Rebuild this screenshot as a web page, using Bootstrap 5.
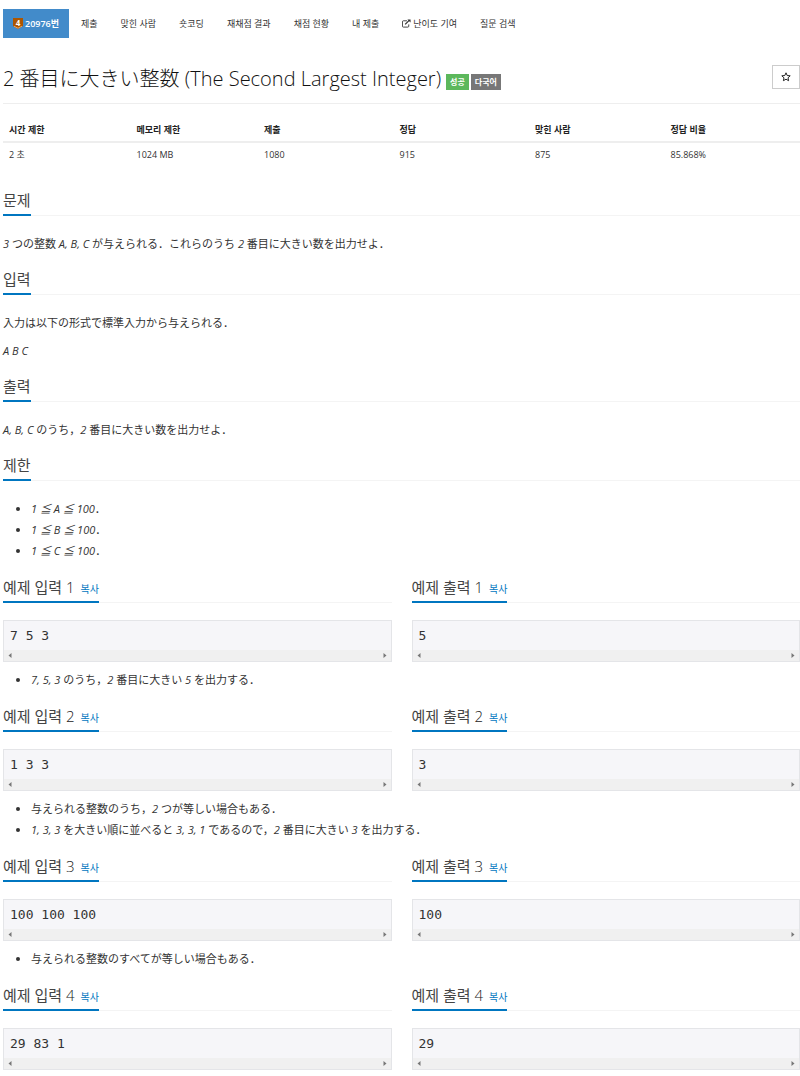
<!DOCTYPE html>
<html lang="ko">
<head>
<meta charset="utf-8">
<meta name="viewport" content="width=device-width, initial-scale=1">
<title>20976번: 2 番目に大きい整数</title>
<link href="https://cdn.jsdelivr.net/npm/bootstrap@5.3.0/dist/css/bootstrap.min.css" rel="stylesheet">
<style>
  body { font-family: "Open Sans", "Noto Sans CJK KR", sans-serif; font-size: 11px; line-height: 21px; color: #333; background: #fff; }
  .page { padding: 9px 0 5px 3px; }
  :lang(ja) { font-family: "Open Sans", "Noto Sans CJK JP", sans-serif; }
  .problem-menu { margin-bottom: 27px; column-gap: 1px; }
  .problem-menu .nav-link { font-size: 9px; line-height: 13px; padding: 8px 11px; color: #333; border-radius: 0; white-space: nowrap; }
  .problem-menu .nav-link.active { background: #428bca; color: #fff; font-weight: 600; padding: 8px 10px; }
  .with-icon { display: flex; align-items: center; gap: 2px; }
  .tier { width: 10px; height: 11px; }
  .problem-head { border-bottom: 1px solid #eee; padding-bottom: 10px; margin-bottom: 14px; }
  .problem-title { font-size: 20px; font-weight: 300; line-height: 28px; color: #111; }
  .tags { gap: 2px; margin: 0 0 3px 5px; }
  .tag { font-size: 8px; font-weight: 600; line-height: 16px; padding: 0 4px; color: #fff; }
  .tag-ok { background: #5cb85c; }
  .tag-lang { background: #777; }
  .btn-star { border: 1px solid #ccc; border-radius: 0; padding: 5px 8px; line-height: 0; background: #fff; }
  .info { font-size: 9px; line-height: 13px; margin-bottom: 20px; table-layout: fixed; }
  .info th, .info td { padding: 5px 6px; border-bottom: 0; color: #333; background: none; box-shadow: none; }
  .info th { font-weight: 700; color: #222; border-bottom: 2px solid #eee; }
  .w16 { width: 16%; }
  .w17 { width: 17%; }
  .headline { border-bottom: 1px solid #f4f4f4; margin: 0 0 17px; height: 30px; display: flex; }
  .headline h2 { font-size: 15px; font-weight: 400; line-height: 28px; height: 30px; color: #444; margin: 0; border-bottom: 2px solid #0076c0; white-space: nowrap; }
  .num { font-weight: 300; color: #222; }
  .copy { font-size: 10px; font-weight: 400; color: #0076c0; border: 0; background: none; padding: 0; margin-left: 2px; line-height: 14px; }
  .text { margin-bottom: 11px; }
  .text p { margin-bottom: 7px; }
  .text p:last-child { margin-bottom: 0; }
  .notes { margin: 0 0 12px; padding-left: 28px; }
  .samples { gap: 20px; }
  .sample { border: 1px solid #e4e5e8; background: #f6f6f9; margin-bottom: 7px; }
  .sample pre { margin: 0; padding: 5px 6px 4px; font-family: "DejaVu Sans Mono", monospace; font-size: 13px; line-height: 20px; color: #333; }
  .track { background: #f0f0f0; height: 11px; padding: 0 4px; }
  .track svg { width: 4px; height: 5px; fill: #777; }
</style>
</head>
<body>
<svg class="d-none">
  <symbol id="arrow-l" viewBox="0 0 4 5"><path d="M3.500 0v5L.5 2.500z"/></symbol>
  <symbol id="arrow-r" viewBox="0 0 4 5"><path d="M.5 0v5l3-2.500z"/></symbol>
</svg>
<main class="page">
  <ul class="nav problem-menu">
    <li class="nav-item"><a class="nav-link active with-icon" href="#"><svg class="tier" viewBox="0 0 10 11"><path d="M0 0h10v8L5 11 0 8z" fill="#ad5600"/><path d="M1 8.200l4 2 4-2" fill="none" stroke="#ffb46b" stroke-width=".8"/><text x="5" y="7.600" font-size="8" font-weight="700" text-anchor="middle" fill="#fff">4</text></svg>20976번</a></li>
    <li class="nav-item"><a class="nav-link" href="#">제출</a></li>
    <li class="nav-item"><a class="nav-link" href="#">맞힌 사람</a></li>
    <li class="nav-item"><a class="nav-link" href="#">숏코딩</a></li>
    <li class="nav-item"><a class="nav-link" href="#">재채점 결과</a></li>
    <li class="nav-item"><a class="nav-link" href="#">채점 현황</a></li>
    <li class="nav-item"><a class="nav-link" href="#">내 제출</a></li>
    <li class="nav-item"><a class="nav-link with-icon" href="#"><svg width="9" height="9" viewBox="0 0 10 9" fill="none" stroke="#333"><path d="M5.500 1.500h-4q-1 0-1 1v5q0 1 1 1h5q1 0 1-1V5.500"/><path d="M3.500 5.500L8 1" stroke-width="1.400"/><path d="M6 0h3.500v3.500z" fill="#333" stroke="none"/></svg>난이도 기여</a></li>
    <li class="nav-item"><a class="nav-link" href="#">질문 검색</a></li>
  </ul>

  <header class="problem-head d-flex justify-content-between align-items-start">
    <div class="d-flex align-items-end">
      <h1 class="problem-title mb-0" lang="ja">2 番目に大きい整数 (The Second Largest Integer)</h1>
      <div class="tags d-flex"><span class="tag tag-ok">성공</span><span class="tag tag-lang">다국어</span></div>
    </div>
    <button type="button" class="btn btn-star" aria-label="즐겨찾기"><svg width="10" height="12" viewBox="0 0 10 12" fill="none" stroke="#222"><path d="M5 1.800l1.200 2.700 3 .3-2.200 2 .6 2.900L5 8.200 2.400 9.700 3 6.800l-2.200-2 3-.3z"/></svg></button>
  </header>

  <table class="table info">
    <thead><tr><th class="w16">시간 제한</th><th class="w16">메모리 제한</th><th class="w17">제출</th><th class="w17">정답</th><th class="w17">맞힌 사람</th><th class="w17">정답 비율</th></tr></thead>
    <tbody><tr><td>2 초</td><td>1024 MB</td><td>1080</td><td>915</td><td>875</td><td>85.868%</td></tr></tbody>
  </table>

  <section>
    <div class="headline"><h2>문제</h2></div>
    <div class="text" lang="ja"><p><em>3</em> つの整数 <em>A, B, C</em> が与えられる．これらのうち <em>2</em> 番目に大きい数を出力せよ．</p></div>
  </section>
  <section>
    <div class="headline"><h2>입력</h2></div>
    <div class="text" lang="ja"><p>入力は以下の形式で標準入力から与えられる．</p><p><em>A B C</em></p></div>
  </section>
  <section>
    <div class="headline"><h2>출력</h2></div>
    <div class="text" lang="ja"><p><em>A, B, C</em> のうち，<em>2</em> 番目に大きい数を出力せよ．</p></div>
  </section>
  <section>
    <div class="headline"><h2>제한</h2></div>
    <ul class="notes" lang="ja"><li><em>1 ≦ A ≦ 100</em>．</li><li><em>1 ≦ B ≦ 100</em>．</li><li><em>1 ≦ C ≦ 100</em>．</li></ul>
  </section>

  <section>
    <div class="samples d-flex">
      <div class="w-50"><div class="headline"><h2>예제 입력 <span class="num">1</span> <button type="button" class="copy">복사</button></h2></div><div class="sample"><pre>7 5 3</pre><div class="track d-flex justify-content-between align-items-center"><svg><use href="#arrow-l"/></svg><svg><use href="#arrow-r"/></svg></div></div></div>
      <div class="w-50"><div class="headline"><h2>예제 출력 <span class="num">1</span> <button type="button" class="copy">복사</button></h2></div><div class="sample"><pre>5</pre><div class="track d-flex justify-content-between align-items-center"><svg><use href="#arrow-l"/></svg><svg><use href="#arrow-r"/></svg></div></div></div>
    </div>
    <ul class="notes" lang="ja"><li><em>7, 5, 3</em> のうち，<em>2</em> 番目に大きい <em>5</em> を出力する．</li></ul>
  </section>
  <section>
    <div class="samples d-flex">
      <div class="w-50"><div class="headline"><h2>예제 입력 <span class="num">2</span> <button type="button" class="copy">복사</button></h2></div><div class="sample"><pre>1 3 3</pre><div class="track d-flex justify-content-between align-items-center"><svg><use href="#arrow-l"/></svg><svg><use href="#arrow-r"/></svg></div></div></div>
      <div class="w-50"><div class="headline"><h2>예제 출력 <span class="num">2</span> <button type="button" class="copy">복사</button></h2></div><div class="sample"><pre>3</pre><div class="track d-flex justify-content-between align-items-center"><svg><use href="#arrow-l"/></svg><svg><use href="#arrow-r"/></svg></div></div></div>
    </div>
    <ul class="notes" lang="ja"><li>与えられる整数のうち，<em>2</em> つが等しい場合もある．</li><li><em>1, 3, 3</em> を大きい順に並べると <em>3, 3, 1</em> であるので，<em>2</em> 番目に大きい <em>3</em> を出力する．</li></ul>
  </section>
  <section>
    <div class="samples d-flex">
      <div class="w-50"><div class="headline"><h2>예제 입력 <span class="num">3</span> <button type="button" class="copy">복사</button></h2></div><div class="sample"><pre>100 100 100</pre><div class="track d-flex justify-content-between align-items-center"><svg><use href="#arrow-l"/></svg><svg><use href="#arrow-r"/></svg></div></div></div>
      <div class="w-50"><div class="headline"><h2>예제 출력 <span class="num">3</span> <button type="button" class="copy">복사</button></h2></div><div class="sample"><pre>100</pre><div class="track d-flex justify-content-between align-items-center"><svg><use href="#arrow-l"/></svg><svg><use href="#arrow-r"/></svg></div></div></div>
    </div>
    <ul class="notes" lang="ja"><li>与えられる整数のすべてが等しい場合もある．</li></ul>
  </section>
  <section>
    <div class="samples d-flex">
      <div class="w-50"><div class="headline"><h2>예제 입력 <span class="num">4</span> <button type="button" class="copy">복사</button></h2></div><div class="sample mb-0"><pre>29 83 1</pre><div class="track d-flex justify-content-between align-items-center"><svg><use href="#arrow-l"/></svg><svg><use href="#arrow-r"/></svg></div></div></div>
      <div class="w-50"><div class="headline"><h2>예제 출력 <span class="num">4</span> <button type="button" class="copy">복사</button></h2></div><div class="sample mb-0"><pre>29</pre><div class="track d-flex justify-content-between align-items-center"><svg><use href="#arrow-l"/></svg><svg><use href="#arrow-r"/></svg></div></div></div>
    </div>
  </section>
</main>
<script src="https://cdn.jsdelivr.net/npm/bootstrap@5.3.0/dist/js/bootstrap.bundle.min.js"></script>
</body>
</html>
